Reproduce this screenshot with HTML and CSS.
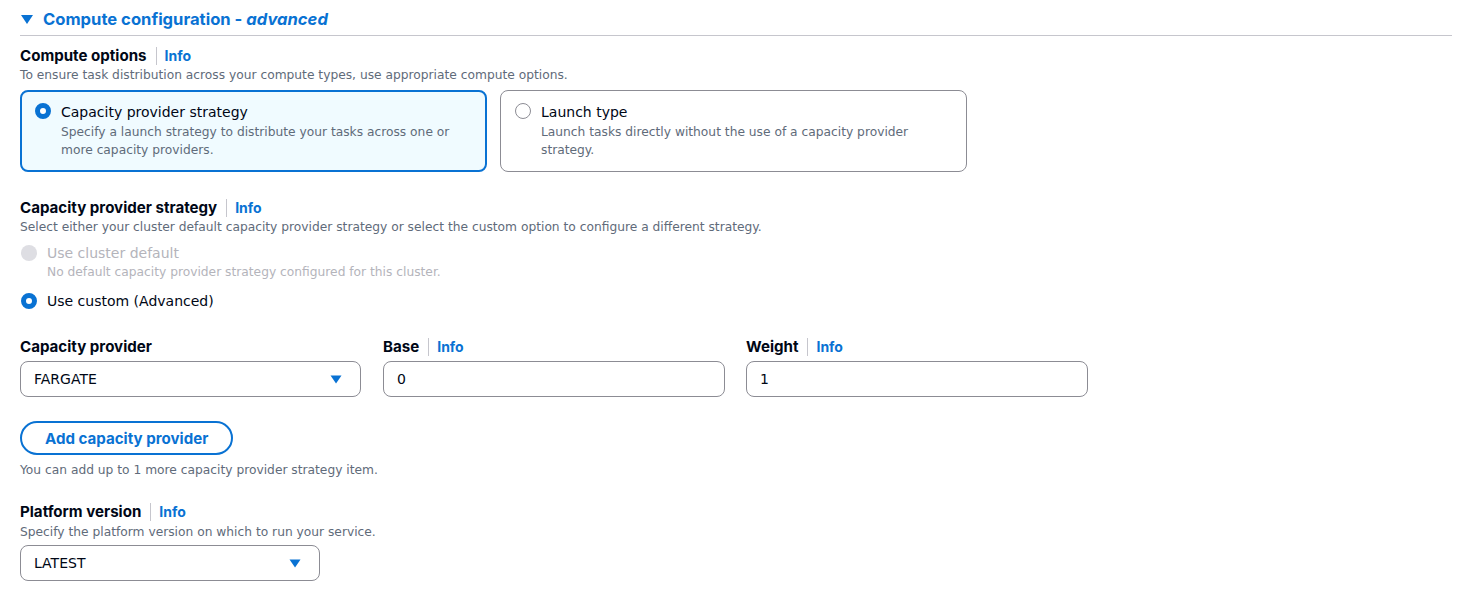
FILE: index.html
```html
<!DOCTYPE html>
<html>
<head>
<meta charset="utf-8">
<link rel="stylesheet" href="styles.css">
</head>
<body>
<div class="page">
  <div class="section-header">
    <svg class="caret" width="12" height="9" viewBox="0 0 12 9"><path d="M0 0 H12 L6 9 Z" fill="#0972d3"/></svg>
    <span class="section-title">Compute configuration - <em>advanced</em></span>
  </div>

  <div class="field">
    <div class="label-row"><span class="label">Compute options</span><span class="sep"></span><a class="info">Info</a></div>
    <div class="desc">To ensure task distribution across your compute types, use appropriate compute options.</div>
    <div class="tiles">
      <div class="tile selected">
        <span class="radio checked"></span>
        <div class="tile-body">
          <div class="tile-title">Capacity provider strategy</div>
          <div class="tile-desc">Specify a launch strategy to distribute your tasks across one or more capacity providers.</div>
        </div>
      </div>
      <div class="tile">
        <span class="radio"></span>
        <div class="tile-body">
          <div class="tile-title">Launch type</div>
          <div class="tile-desc">Launch tasks directly without the use of a capacity provider strategy.</div>
        </div>
      </div>
    </div>
  </div>

  <div class="field strategy">
    <div class="label-row"><span class="label">Capacity provider strategy</span><span class="sep"></span><a class="info">Info</a></div>
    <div class="desc">Select either your cluster default capacity provider strategy or select the custom option to configure a different strategy.</div>
    <div class="radio-group">
      <div class="radio-item disabled">
        <span class="radio"></span>
        <div>
          <div class="radio-label">Use cluster default</div>
          <div class="radio-desc">No default capacity provider strategy configured for this cluster.</div>
        </div>
      </div>
      <div class="radio-item">
        <span class="radio checked"></span>
        <div>
          <div class="radio-label">Use custom (Advanced)</div>
        </div>
      </div>
    </div>
  </div>

  <div class="provider-grid">
    <div class="col">
      <div class="label-row"><span class="label">Capacity provider</span></div>
      <div class="control select"><span>FARGATE</span><svg class="dd" width="12" height="9" viewBox="0 0 12 9"><path d="M0.5 0.5 H11.5 L6 8.5 Z" fill="#0972d3"/></svg></div>
    </div>
    <div class="col">
      <div class="label-row"><span class="label">Base</span><span class="sep"></span><a class="info">Info</a></div>
      <div class="control"><span>0</span></div>
    </div>
    <div class="col">
      <div class="label-row"><span class="label">Weight</span><span class="sep"></span><a class="info">Info</a></div>
      <div class="control"><span>1</span></div>
    </div>
  </div>

  <div class="add-block">
    <button class="btn">Add capacity provider</button>
    <div class="hint">You can add up to 1 more capacity provider strategy item.</div>
  </div>

  <div class="field platform">
    <div class="label-row"><span class="label">Platform version</span><span class="sep"></span><a class="info">Info</a></div>
    <div class="desc">Specify the platform version on which to run your service.</div>
    <div class="control select narrow"><span>LATEST</span><svg class="dd" width="12" height="9" viewBox="0 0 12 9"><path d="M0.5 0.5 H11.5 L6 8.5 Z" fill="#0972d3"/></svg></div>
  </div>
</div>
</body>
</html>
```

FILE: styles.css
```css
* { box-sizing: border-box; }
html, body { margin: 0; padding: 0; background: #ffffff; }
body {
  font-family: "DejaVu Sans", "Open Sans", sans-serif;
  color: #000716;
  font-size: 14px;
}
.page {
  padding: 0 17px 0 20px;
}
.section-header {
  display: flex;
  align-items: center;
  padding-top: 6px;
  padding-bottom: 3px;
  height: 36px;
  border-bottom: 1px solid #c6c6cd;
}
.caret { margin-left: 1px; margin-right: 10px; }
.section-title {
  font-family: Inter, "DejaVu Sans", sans-serif;
  font-size: 16.6px;
  font-weight: 700;
  color: #0972d3;
  line-height: 26px;
}
.section-title em { font-style: italic; }

.field { margin-top: 8px; }
.label-row {
  display: flex;
  align-items: baseline;
  height: 22px;
  padding-top: 1px;
}
.label {
  font-family: Inter, "DejaVu Sans", sans-serif;
  font-weight: 700;
  font-size: 15.1px;
  line-height: 21px;
}
.sep {
  align-self: center;
  width: 1px;
  height: 18px;
  background: #c6c6cd;
  margin: 0 8px 0 9px;
}
.info {
  font-family: Inter, "DejaVu Sans", sans-serif;
  color: #0972d3;
  font-weight: 700;
  font-size: 14px;
  line-height: 21px;
}
.desc {
  font-size: 12.25px;
  line-height: 18px;
  color: #5f6b7a;
}

.tiles {
  display: grid;
  grid-template-columns: 467px 467px;
  gap: 13px;
  margin-top: 6px;
}
.tile {
  display: flex;
  align-items: flex-start;
  border: 1px solid #8c8c94;
  border-radius: 8px;
  padding: 11px 14px 10px 14px;
  height: 82px;
}
.tile.selected {
  border: 2px solid #0972d3;
  background: #f0fbff;
  padding: 10px 13px 9px 13px;
}
.tile .radio { margin-top: 1px; }
.tile-body { margin-left: 10px; }
.tile-title { font-size: 14px; line-height: 21px; }
.tile-desc { font-size: 12.25px; line-height: 18px; color: #5f6b7a; }

.radio {
  flex: none;
  width: 16px;
  height: 16px;
  border-radius: 50%;
  border: 1.5px solid #8c8c94;
  background: #fff;
  display: inline-block;
}
.radio.checked {
  border: 5px solid #0972d3;
  background: #fff;
}
.radio-item.disabled .radio {
  border: none;
  background: #dedee3;
}

.strategy { margin-top: 24px; }
.radio-group { margin-top: 7px; }
.radio-item {
  display: flex;
  align-items: flex-start;
  margin-left: 1px;
}
.radio-item .radio { margin-top: 2px; }
.radio-item > div { margin-left: 10px; }
.radio-item + .radio-item { margin-top: 10px; }
.radio-label { font-size: 14px; line-height: 20px; }
.radio-desc { font-size: 12.25px; line-height: 18px; color: #b4b4bb; }
.radio-item.disabled .radio-label { color: #b4b4bb; }

.provider-grid {
  display: grid;
  grid-template-columns: 342px 342px 342px;
  gap: 21px;
  margin-top: 24px;
}
.col .label-row { margin-bottom: 4px; }
.control {
  display: flex;
  align-items: center;
  justify-content: space-between;
  height: 36px;
  border: 1px solid #8c8c94;
  border-radius: 8px;
  padding: 0 18px 0 13px;
  font-size: 14px;
}
.select { width: 341px; }
.narrow { width: 300px; }

.add-block { margin-top: 24px; }
.btn {
  display: inline-block;
  font-family: Inter, "DejaVu Sans", sans-serif;
  font-size: 15.1px;
  font-weight: 700;
  color: #0972d3;
  background: #fff;
  border: 2px solid #0972d3;
  border-radius: 20px;
  height: 34px;
  padding: 0 23px;
  cursor: pointer;
}
.hint {
  margin-top: 7px;
  font-size: 12.25px;
  line-height: 16px;
  color: #5f6b7a;
}
.platform { margin-top: 22px; }
.platform .desc { margin-bottom: 2px; line-height: 21px; }
```
